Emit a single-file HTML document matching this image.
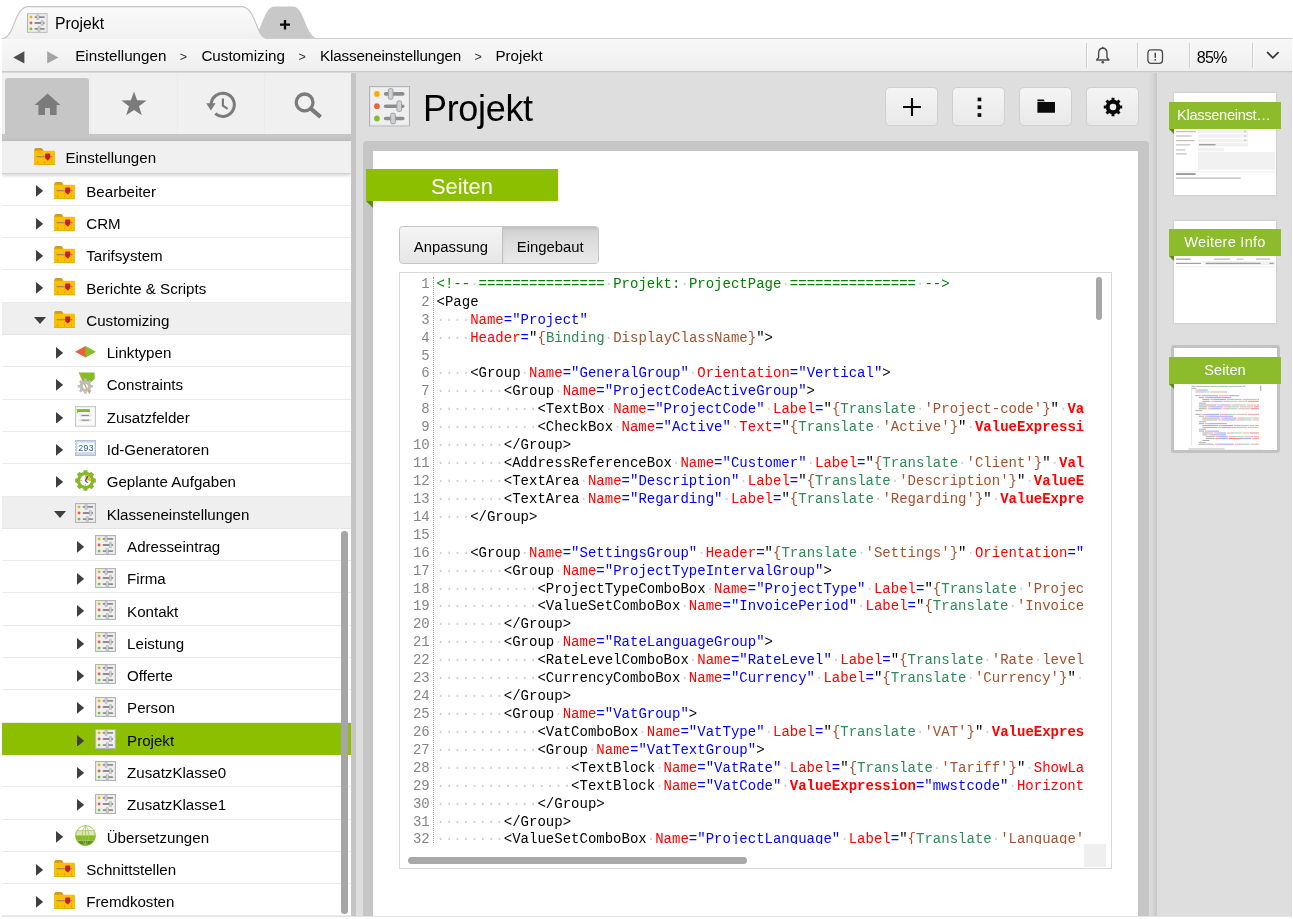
<!DOCTYPE html>
<html lang="de"><head><meta charset="utf-8"><title>Projekt</title>
<style>
html,body{margin:0;padding:0}
body{width:1293px;height:919px;overflow:hidden;background:#fff;position:relative;font-family:"Liberation Sans",sans-serif;color:#000;font-size:15.1px}
.abs,.row,.ic,.ar,.lbl{position:absolute}
#tabstrip{left:0;top:0;width:1293px;height:40px}
#tabtitle{left:55.1px;top:15.1px;font-size:15.75px;line-height:18px;color:#000}
#crumb{left:2px;top:39px;width:1290px;height:32px;background:linear-gradient(#f8f8f8,#efefef);border-bottom:1px solid #c9c9c9;box-shadow:0 1px 0 #d9d9d9;z-index:2}
#crumb span{position:absolute;top:8.1px;line-height:18px;font-size:15.2px;white-space:nowrap;color:#000}
#crumb .sep{font-size:12.5px;top:8.6px;color:#333}
#crumb .vs{position:absolute;top:3.5px;width:1px;height:25.5px;background:#cfcfcf;border-right:1px solid #fafafa}
#left{left:2px;top:73px;width:349.3px;height:843px;background:#fff;overflow:hidden}
#navtabs{left:0;top:0;width:349.3px;height:61px;background:#f0f0f0}
#navtabs .home{position:absolute;left:3.3px;top:5px;width:84.2px;height:56px;background:#c6c6c6;border-radius:3px 3px 0 0}
#navtabs .vs{position:absolute;top:0;width:1px;height:61px;background:#ebebeb}
#navbar{left:0;top:61px;width:349.3px;height:7.3px;background:#c6c6c6}
#treehead{left:0;top:68.3px;width:349.3px;height:31.6px;background:#f0f0f0;border-bottom:1px solid #d2d2d2;z-index:3;box-shadow:0 1px 4px rgba(0,0,0,0.22)}
#treehead .lbl{left:63.4px;top:8.2px;line-height:18px;white-space:nowrap}
#tree{left:0;top:68.3px;width:349.3px;height:775px}
.row{left:0;width:349.3px;height:32.3px;box-sizing:border-box;border-bottom:1.7px solid #ebebeb}
.row.hl{background:#efefef;border-bottom-color:#e4e4e4}
.row.sel{background:#8cbf00;border-bottom-color:#8cbf00}
.row .lbl{top:9.1px;line-height:18px;white-space:nowrap}
#tscroll{left:339.3px;top:458px;width:6.6px;height:383px;border-radius:3.3px;background:#a6a6a6;z-index:4}
#split{left:351.3px;top:73px;width:5.2px;height:843px;background:#c6c6c6}
#main{left:356px;top:73px;width:936px;height:843px;background:#dedede}
#title{left:423px;top:87px;font-size:36px;line-height:44px;letter-spacing:-0.32px;color:#000;white-space:nowrap}
.btn{position:absolute;top:87.3px;width:52.7px;height:39px;box-sizing:border-box;border:1px solid #cfcfcf;border-radius:4.5px;background:linear-gradient(#f4f4f4,#e9e9e9)}
#card{left:363px;top:141px;width:785.5px;height:775px;background:#c6c6c6;border-radius:4px 4px 0 0}
#cardin{left:373px;top:151px;width:765px;height:765px;background:#fff}
#ribbon{left:366px;top:169px;width:191.5px;height:32px;background:#8cbf00;color:#fff;font-size:21.9px;line-height:32px;text-align:center}
#ribbon span{position:relative;top:1.7px;left:0.2px}
#fold{left:366px;top:201px;width:0;height:0;border-top:7px solid #5b8a13;border-left:7px solid transparent}
#toggle{left:399px;top:226px;width:199.6px;height:38.3px;box-sizing:border-box;border:1px solid #c6c6c6;border-radius:3.5px;background:linear-gradient(#f4f4f4,#e6e6e6);overflow:hidden}
#toggle .on{position:absolute;left:101.6px;top:0;width:97px;height:36px;background:linear-gradient(#d0d0d0,#dbdbdb 35%,#e5e5e5 80%,#e9e9e9);border-left:1px solid #c2c2c2;box-shadow:inset 0 2px 3px rgba(0,0,0,0.08)}
#toggle span{position:absolute;top:10.9px;font-size:14.85px;line-height:18px;white-space:nowrap;color:#000}
#editor{left:399.2px;top:272.2px;width:712.4px;height:597px;box-sizing:border-box;border:1px solid #d9d9d9;background:#fff;overflow:hidden}
#nums{left:0;top:2.7px;width:29.6px;height:568.5px;overflow:hidden;text-align:right;color:#858585}
#gut{left:33.3px;top:4px;width:0;height:566px;border-left:1px dotted #9a9a9a}
#code{left:36.3px;top:2.7px;width:647.2px;height:568.5px;overflow:hidden;white-space:pre}
#nums,#code{font-family:"Liberation Mono",monospace;font-size:14.02px;line-height:17.93px}
#nums div,#code div{height:17.93px}
#code b{font-weight:normal}
#code i{font-style:normal;color:#cfcfcf}
#code .t{color:#000} #code .a{color:#ff0000} #code .v{color:#0000ff} #code .c{color:#008200}
#code .x{color:#ff0000;font-weight:bold} #code .m{color:#a5512c} #code .g{color:#2d8b57}
#vthumb{left:695.5px;top:3.6px;width:6.8px;height:43.6px;border-radius:3.4px;background:#a8a8a8}
#hthumb{left:8px;top:583.8px;width:338.5px;height:7.2px;border-radius:3.6px;background:#a8a8a8}
#corner{left:683.6px;top:571px;width:22.6px;height:22.4px;background:#efefef}
#strip{left:1148.5px;top:73px;width:8.3px;height:843px;background:linear-gradient(90deg,#dcdcdc,#d6d6d6 50%,#c6c6c6)}
#side{left:1156.8px;top:73px;width:135.2px;height:843px;background:#dedede}
.th{position:absolute;left:1174px;width:102.3px;height:102px;background:#fff;box-shadow:0 0 2px rgba(0,0,0,0.18);overflow:hidden}
.rb{position:absolute;left:1169px;width:112px;height:26.7px;background:#8cbb2b;color:#fff;font-size:14.6px;line-height:26.7px;text-align:center;white-space:nowrap}
.fd{position:absolute;left:1169px;width:0;height:0;border-top:5px solid #5b8a13;border-left:5px solid transparent}
#thsel{left:1170.5px;top:345px;width:109.5px;height:108px;box-sizing:border-box;border:3.4px solid #c2c2c2;border-radius:3px;background:#fff}
#botline{left:2px;top:915.6px;width:1290px;height:1px;background:#e4e4e4}
#app{position:absolute;left:0;top:0;width:1293px;height:919px;will-change:transform;background:#fff}
</style></head><body><div id="app">

<svg id="tabstrip" class="abs" width="1293" height="40" viewBox="0 0 1293 40">
<defs><linearGradient id="tg" x1="0" y1="0" x2="0" y2="1"><stop offset="0" stop-color="#fafafa"/><stop offset="1" stop-color="#f1f1f1"/></linearGradient></defs>
<path d="M250,38.6 C262,38.6 262,6.6 275,6.6 L293,6.6 C305,6.6 305,38.6 319,38.6 Z" fill="#c8c8c8"/>
<path d="M266,38.6 L1292,38.6" stroke="#cdcdcd" stroke-width="1.2" fill="none"/>
<path d="M2,39 C15,38.6 13.5,6.6 28.5,6.6 L241,6.6 C257,6.6 255,38.6 268,39 Z" fill="url(#tg)"/>
<path d="M2,38.6 C15,38.6 13.5,6.6 28.5,6.6 L241,6.6 C257,6.6 255,38.6 268,38.6" fill="none" stroke="#c3c3c3" stroke-width="1.1"/>
<path d="M280,24.7 L290,24.7 M285,19.9 L285,29.6" stroke="#0a0a0a" stroke-width="2.3" fill="none"/>
</svg>
<svg class="ic" style="left:27.2px;top:12.9px" width="20.5" height="20" viewBox="0 0 21 20"><rect x="0.51" y="0.51" width="19.98" height="18.98" fill="#efefef" stroke="#b4b4b4" stroke-width="1.02"/><rect x="1.54" y="1.54" width="17.93" height="16.93" fill="none" stroke="#e6e6e6" stroke-width="1.02"/><circle cx="4.05" cy="3.9" r="1.45" fill="#f5b000"/><rect x="7.6" y="3.0" width="10.6" height="1.8" rx="0.9" fill="#8c8d8f"/><rect x="9.9" y="1.2999999999999998" width="2.4" height="5.2" rx="0.7" fill="#d0d1d3" stroke="#9b9c9e" stroke-width="0.45"/><circle cx="4.05" cy="10" r="1.45" fill="#ea6238"/><rect x="7.6" y="9.1" width="10.6" height="1.8" rx="0.9" fill="#8c8d8f"/><rect x="14.3" y="7.4" width="2.4" height="5.2" rx="0.7" fill="#d0d1d3" stroke="#9b9c9e" stroke-width="0.45"/><circle cx="4.05" cy="16.1" r="1.45" fill="#86bc25"/><rect x="7.6" y="15.200000000000001" width="10.6" height="1.8" rx="0.9" fill="#8c8d8f"/><rect x="11.1" y="13.500000000000002" width="2.4" height="5.2" rx="0.7" fill="#d0d1d3" stroke="#9b9c9e" stroke-width="0.45"/></svg>
<div id="tabtitle" class="abs">Projekt</div>

<div id="crumb" class="abs">
<svg class="abs" style="left:11.4px;top:11.5px" width="12" height="13" viewBox="0 0 12 13"><path d="M11.4,0.2 L11.4,12.6 L0.2,6.4 Z" fill="#4e4e4e"/></svg>
<svg class="abs" style="left:45.4px;top:11.5px" width="12" height="13" viewBox="0 0 12 13"><path d="M0.2,0.2 L0.2,12.6 L11.4,6.4 Z" fill="#a4a4a4"/></svg>
<span style="left:73.2px">Einstellungen</span><span class="sep" style="left:177.8px">&gt;</span>
<span style="left:199.4px">Customizing</span><span class="sep" style="left:296.6px">&gt;</span>
<span style="left:318px;letter-spacing:-0.12px">Klasseneinstellungen</span><span class="sep" style="left:472.4px">&gt;</span>
<span style="left:493.4px">Projekt</span>
<div class="vs" style="left:1084px"></div><div class="vs" style="left:1135px"></div><div class="vs" style="left:1187px"></div><div class="vs" style="left:1249.6px"></div>
<svg class="abs" style="left:1093px;top:7px" width="16" height="20" viewBox="0 0 16 20"><path d="M7.8,2.2 C4.9,2.2 3.6,4.6 3.6,7.4 L3.6,11.6 L1.6,14 L14,14 L12,11.6 L12,7.4 C12,4.6 10.7,2.2 7.8,2.2 Z" fill="none" stroke="#4a4a4a" stroke-width="1.4" stroke-linejoin="round"/><path d="M7.8,0.8 L7.8,2.2" stroke="#4a4a4a" stroke-width="1.4"/><circle cx="7.8" cy="16.3" r="1.3" fill="#4a4a4a"/></svg>
<svg class="abs" style="left:1144.6px;top:9.6px" width="17" height="16" viewBox="0 0 17 16"><rect x="0.9" y="0.9" width="14.6" height="13.4" rx="3" fill="none" stroke="#4a4a4a" stroke-width="1.3"/><rect x="7.5" y="3.8" width="1.5" height="5" fill="#4a4a4a"/><rect x="7.5" y="10" width="1.5" height="1.6" fill="#4a4a4a"/></svg>
<span style="left:1194.8px;top:8.5px;font-size:16.1px;letter-spacing:-0.8px">85%</span>
<svg class="abs" style="left:1264px;top:11.6px" width="14" height="9" viewBox="0 0 14 9"><path d="M1.2,1.2 L6.9,6.9 L12.6,1.2" fill="none" stroke="#333" stroke-width="1.7"/></svg>
</div>

<div id="left" class="abs">
 <div id="navtabs" class="abs">
  <div class="home"></div>
  <div class="vs" style="left:88px"></div><div class="vs" style="left:175px"></div><div class="vs" style="left:261.6px"></div>
  <svg class="abs" style="left:32px;top:20px" width="27" height="23" viewBox="0 0 27 23"><path d="M13.5,0.6 L26.4,12 L22.6,12 L22.6,22 L16,22 L16,15 L11,15 L11,22 L4.4,22 L4.4,12 L0.6,12 Z" fill="#7b7b7b"/></svg>
  <svg class="abs" style="left:119px;top:18.2px" width="26" height="25" viewBox="0 0 26 25"><path d="M13,0.4 L16.1,9.3 L25.6,9.5 L18,15.2 L20.8,24.3 L13,18.9 L5.2,24.3 L8,15.2 L0.4,9.5 L9.9,9.3 Z" fill="#7b7b7b"/></svg>
  <svg class="abs" style="left:204px;top:18px" width="32" height="28" viewBox="0 0 32 28"><path d="M5.1,13.8 A11.6,11.6 0 1 1 9.24,22.69" fill="none" stroke="#7b7b7b" stroke-width="3"/><path d="M0.2,12.3 L9.6,12.3 L4.9,19.4 Z" fill="#7b7b7b"/><path d="M16.9,7.6 L16.9,14.6 L21.6,17.8" fill="none" stroke="#7b7b7b" stroke-width="2.2"/></svg>
  <svg class="abs" style="left:291px;top:18px" width="30" height="28" viewBox="0 0 30 28"><circle cx="11.6" cy="11.4" r="8.4" fill="none" stroke="#7b7b7b" stroke-width="3.3"/><path d="M17.8,17.6 L27.6,26" stroke="#7b7b7b" stroke-width="4.2"/></svg>
 </div>
 <div id="navbar" class="abs"></div>
 <div id="tree" class="abs">
<div class="row" style="top:32.3px"><svg class="ar" style="left:33.8px;top:11.9px" width="7.2" height="11.8" viewBox="0 0 7.2 11.8"><path d="M0,0 L7.2,5.9 L0,11.8 Z" fill="#3f3f3f"/></svg><svg class="ic" style="left:52.2px;top:8.0px" width="21" height="17.2" viewBox="0 0 21 17.2"><path d="M0,3 L0.8,0.6 Q1,0 1.8,0 L7,0 Q7.8,0 8.4,0.8 L9.6,3 Z" fill="#cf9d16"/><rect x="0" y="2.8" width="21" height="14.4" rx="0.8" fill="#f9c000"/><rect x="0" y="16.2" width="21" height="1" fill="#e4ae0c"/><rect x="2.6" y="8" width="15.8" height="1.3" fill="#9c8f58"/><path d="M11.2,6 Q11.2,5.5 11.8,5.5 L15.6,5.5 Q16.2,5.5 16.2,6 L16.2,10.2 L13.7,12.6 L11.2,10.2 Z" fill="#cb1b23"/><rect x="3.2" y="13.4" width="0.9" height="2" fill="#c99a19"/><rect x="10.1" y="13.4" width="0.9" height="2" fill="#c99a19"/><rect x="17" y="13.4" width="0.9" height="2" fill="#c99a19"/></svg><span class="lbl" style="left:84.3px">Bearbeiter</span></div>
<div class="row" style="top:64.6px"><svg class="ar" style="left:33.8px;top:11.9px" width="7.2" height="11.8" viewBox="0 0 7.2 11.8"><path d="M0,0 L7.2,5.9 L0,11.8 Z" fill="#3f3f3f"/></svg><svg class="ic" style="left:52.2px;top:8.0px" width="21" height="17.2" viewBox="0 0 21 17.2"><path d="M0,3 L0.8,0.6 Q1,0 1.8,0 L7,0 Q7.8,0 8.4,0.8 L9.6,3 Z" fill="#cf9d16"/><rect x="0" y="2.8" width="21" height="14.4" rx="0.8" fill="#f9c000"/><rect x="0" y="16.2" width="21" height="1" fill="#e4ae0c"/><rect x="2.6" y="8" width="15.8" height="1.3" fill="#9c8f58"/><path d="M11.2,6 Q11.2,5.5 11.8,5.5 L15.6,5.5 Q16.2,5.5 16.2,6 L16.2,10.2 L13.7,12.6 L11.2,10.2 Z" fill="#cb1b23"/><rect x="3.2" y="13.4" width="0.9" height="2" fill="#c99a19"/><rect x="10.1" y="13.4" width="0.9" height="2" fill="#c99a19"/><rect x="17" y="13.4" width="0.9" height="2" fill="#c99a19"/></svg><span class="lbl" style="left:84.3px">CRM</span></div>
<div class="row" style="top:96.9px"><svg class="ar" style="left:33.8px;top:11.9px" width="7.2" height="11.8" viewBox="0 0 7.2 11.8"><path d="M0,0 L7.2,5.9 L0,11.8 Z" fill="#3f3f3f"/></svg><svg class="ic" style="left:52.2px;top:8.0px" width="21" height="17.2" viewBox="0 0 21 17.2"><path d="M0,3 L0.8,0.6 Q1,0 1.8,0 L7,0 Q7.8,0 8.4,0.8 L9.6,3 Z" fill="#cf9d16"/><rect x="0" y="2.8" width="21" height="14.4" rx="0.8" fill="#f9c000"/><rect x="0" y="16.2" width="21" height="1" fill="#e4ae0c"/><rect x="2.6" y="8" width="15.8" height="1.3" fill="#9c8f58"/><path d="M11.2,6 Q11.2,5.5 11.8,5.5 L15.6,5.5 Q16.2,5.5 16.2,6 L16.2,10.2 L13.7,12.6 L11.2,10.2 Z" fill="#cb1b23"/><rect x="3.2" y="13.4" width="0.9" height="2" fill="#c99a19"/><rect x="10.1" y="13.4" width="0.9" height="2" fill="#c99a19"/><rect x="17" y="13.4" width="0.9" height="2" fill="#c99a19"/></svg><span class="lbl" style="left:84.3px">Tarifsystem</span></div>
<div class="row" style="top:129.2px"><svg class="ar" style="left:33.8px;top:11.9px" width="7.2" height="11.8" viewBox="0 0 7.2 11.8"><path d="M0,0 L7.2,5.9 L0,11.8 Z" fill="#3f3f3f"/></svg><svg class="ic" style="left:52.2px;top:8.0px" width="21" height="17.2" viewBox="0 0 21 17.2"><path d="M0,3 L0.8,0.6 Q1,0 1.8,0 L7,0 Q7.8,0 8.4,0.8 L9.6,3 Z" fill="#cf9d16"/><rect x="0" y="2.8" width="21" height="14.4" rx="0.8" fill="#f9c000"/><rect x="0" y="16.2" width="21" height="1" fill="#e4ae0c"/><rect x="2.6" y="8" width="15.8" height="1.3" fill="#9c8f58"/><path d="M11.2,6 Q11.2,5.5 11.8,5.5 L15.6,5.5 Q16.2,5.5 16.2,6 L16.2,10.2 L13.7,12.6 L11.2,10.2 Z" fill="#cb1b23"/><rect x="3.2" y="13.4" width="0.9" height="2" fill="#c99a19"/><rect x="10.1" y="13.4" width="0.9" height="2" fill="#c99a19"/><rect x="17" y="13.4" width="0.9" height="2" fill="#c99a19"/></svg><span class="lbl" style="left:84.3px">Berichte &amp; Scripts</span></div>
<div class="row hl" style="top:161.5px"><svg class="ar" style="left:31.8px;top:14.5px" width="12" height="7" viewBox="0 0 12 7"><path d="M0,0 L12,0 L6,7 Z" fill="#3f3f3f"/></svg><svg class="ic" style="left:52.2px;top:8.0px" width="21" height="17.2" viewBox="0 0 21 17.2"><path d="M0,3 L0.8,0.6 Q1,0 1.8,0 L7,0 Q7.8,0 8.4,0.8 L9.6,3 Z" fill="#cf9d16"/><rect x="0" y="2.8" width="21" height="14.4" rx="0.8" fill="#f9c000"/><rect x="0" y="16.2" width="21" height="1" fill="#e4ae0c"/><rect x="2.6" y="8" width="15.8" height="1.3" fill="#9c8f58"/><path d="M11.2,6 Q11.2,5.5 11.8,5.5 L15.6,5.5 Q16.2,5.5 16.2,6 L16.2,10.2 L13.7,12.6 L11.2,10.2 Z" fill="#cb1b23"/><rect x="3.2" y="13.4" width="0.9" height="2" fill="#c99a19"/><rect x="10.1" y="13.4" width="0.9" height="2" fill="#c99a19"/><rect x="17" y="13.4" width="0.9" height="2" fill="#c99a19"/></svg><span class="lbl" style="left:84.3px">Customizing</span></div>
<div class="row" style="top:193.8px"><svg class="ar" style="left:54.2px;top:11.9px" width="7.2" height="11.8" viewBox="0 0 7.2 11.8"><path d="M0,0 L7.2,5.9 L0,11.8 Z" fill="#3f3f3f"/></svg><svg class="ic" style="left:72.6px;top:11.1px" width="21" height="12" viewBox="0 0 21 12"><path d="M0,5.7 L10.6,0 L10.6,11.4 Z" fill="#e9623b"/><path d="M21,5.7 L10.6,0 L10.6,11.4 Z" fill="#86bc25"/><rect x="10.2" y="0.2" width="0.8" height="11" fill="#c8862c"/></svg><span class="lbl" style="left:104.7px">Linktypen</span></div>
<div class="row" style="top:226.1px"><svg class="ar" style="left:54.2px;top:11.9px" width="7.2" height="11.8" viewBox="0 0 7.2 11.8"><path d="M0,0 L7.2,5.9 L0,11.8 Z" fill="#3f3f3f"/></svg><svg class="ic" style="left:74.7px;top:4.9px" width="19" height="22" viewBox="0 0 19 22"><path d="M2,0.6 L17.2,0.6 Q17.6,0.6 17.6,1.1 L17.6,7 L14,10.2 L6,10.2 Z" fill="#86bc25"/><path d="M1.6,0.6 L2.8,0.6 L6.4,8 L5.2,8.6 Z" fill="#d2a438"/><path d="M13.83,12.83 L15.89,12.89 L15.89,15.51 L13.83,15.57 L13.18,17.14 L14.59,18.64 L12.74,20.49 L11.24,19.08 L9.67,19.73 L9.61,21.79 L6.99,21.79 L6.93,19.73 L5.36,19.08 L3.86,20.49 L2.01,18.64 L3.42,17.14 L2.77,15.57 L0.71,15.51 L0.71,12.89 L2.77,12.83 L3.42,11.26 L2.01,9.76 L3.86,7.91 L5.36,9.32 L6.93,8.67 L6.99,6.61 L9.61,6.61 L9.67,8.67 L11.24,9.32 L12.74,7.91 L14.59,9.76 L13.18,11.26 Z" fill="#bdbdbd"/><circle cx="8.3" cy="14.2" r="2.5" fill="#fff"/><path d="M6.6,11.4 L8,11.4 L10.2,16.6 L8.8,16.6 Z" fill="#d2a438"/><path d="M10.6,18.4 L12,18 L13.4,21.4 L11.8,21.4 Z" fill="#d2a438"/></svg><span class="lbl" style="left:104.7px">Constraints</span></div>
<div class="row" style="top:258.4px"><svg class="ar" style="left:54.2px;top:11.9px" width="7.2" height="11.8" viewBox="0 0 7.2 11.8"><path d="M0,0 L7.2,5.9 L0,11.8 Z" fill="#3f3f3f"/></svg><svg class="ic" style="left:72.6px;top:6.4px" width="21" height="21" viewBox="0 0 21 21"><rect x="0.5" y="0.5" width="20" height="19.6" fill="#fbfbfb" stroke="#bdbdbd"/><rect x="1.2" y="1.2" width="18.6" height="18.2" fill="none" stroke="#ececec" stroke-width="1"/><rect x="1.9" y="3.1" width="13" height="2.9" fill="#84bd22"/><path d="M1.9,6 L3.2,6 L1.9,7.3 Z" fill="#5d8c17"/><rect x="4.2" y="8.2" width="12.4" height="2.6" rx="1" fill="#e3e3e3"/><rect x="6.6" y="9" width="7.4" height="1" fill="#8a8a8a"/><rect x="4.2" y="12.9" width="12.4" height="2.6" rx="1" fill="#e3e3e3"/><rect x="6.6" y="13.7" width="7.4" height="1" fill="#8a8a8a"/></svg><span class="lbl" style="left:104.7px">Zusatzfelder</span></div>
<div class="row" style="top:290.7px"><svg class="ar" style="left:54.2px;top:11.9px" width="7.2" height="11.8" viewBox="0 0 7.2 11.8"><path d="M0,0 L7.2,5.9 L0,11.8 Z" fill="#3f3f3f"/></svg><svg class="ic" style="left:72.6px;top:8.2px" width="21" height="16" viewBox="0 0 21 16"><rect x="0.5" y="0.5" width="20" height="15" fill="#c9d7e6" stroke="#a9bfd6"/><rect x="2.4" y="2.6" width="17" height="9.6" fill="#fff"/><text x="10.9" y="10.9" text-anchor="middle" font-family="Liberation Mono, monospace" font-size="9.8" textLength="16" lengthAdjust="spacingAndGlyphs" fill="#2f5f90">293</text><rect x="0" y="2" width="1" height="1.2" fill="#fff"/><rect x="0" y="5" width="1" height="1.2" fill="#fff"/><rect x="0" y="8" width="1" height="1.2" fill="#fff"/><rect x="0" y="11" width="1" height="1.2" fill="#fff"/></svg><span class="lbl" style="left:104.7px">Id-Generatoren</span></div>
<div class="row" style="top:323.0px"><svg class="ar" style="left:54.2px;top:11.9px" width="7.2" height="11.8" viewBox="0 0 7.2 11.8"><path d="M0,0 L7.2,5.9 L0,11.8 Z" fill="#3f3f3f"/></svg><svg class="ic" style="left:72.6px;top:5.6px" width="21" height="21" viewBox="0 0 21 21"><path d="M18.52,8.37 L20.83,8.61 L20.83,12.39 L18.52,12.63 L17.68,14.67 L19.14,16.46 L16.46,19.14 L14.67,17.68 L12.63,18.52 L12.39,20.83 L8.61,20.83 L8.37,18.52 L6.33,17.68 L4.54,19.14 L1.86,16.46 L3.32,14.67 L2.48,12.63 L0.17,12.39 L0.17,8.61 L2.48,8.37 L3.32,6.33 L1.86,4.54 L4.54,1.86 L6.33,3.32 L8.37,2.48 L8.61,0.17 L12.39,0.17 L12.63,2.48 L14.67,3.32 L16.46,1.86 L19.14,4.54 L17.68,6.33 Z" fill="#84b92a"/><circle cx="10.5" cy="10.5" r="8.5" fill="#84b92a"/><circle cx="10.5" cy="10.5" r="5.4" fill="#fff"/><path d="M10.5,10.5 L10.5,5.1 A5.4,5.4 0 0 1 15.9,10.5 Z" fill="#fbbb12"/><path d="M10.5,5.4 L10.5,6.8 M10.5,14.2 L10.5,15.6 M5.4,10.5 L6.8,10.5 M14.2,10.5 L15.6,10.5" stroke="#ee6a4c" stroke-width="0.8"/><path d="M12.6,6.4 L10.4,10.6 L12.2,12.4" stroke="#2c5f91" stroke-width="1.3" fill="none" stroke-linecap="round" stroke-linejoin="round"/></svg><span class="lbl" style="left:104.7px">Geplante Aufgaben</span></div>
<div class="row hl" style="top:355.3px"><svg class="ar" style="left:52.2px;top:14.5px" width="12" height="7" viewBox="0 0 12 7"><path d="M0,0 L12,0 L6,7 Z" fill="#3f3f3f"/></svg><svg class="ic" style="left:72.6px;top:6.4px" width="21" height="20" viewBox="0 0 21 20"><rect x="0.50" y="0.50" width="20.00" height="19.00" fill="#efefef" stroke="#b4b4b4" stroke-width="1.00"/><rect x="1.50" y="1.50" width="18.00" height="17.00" fill="none" stroke="#e6e6e6" stroke-width="1.00"/><circle cx="4.05" cy="3.9" r="1.45" fill="#f5b000"/><rect x="7.6" y="3.0" width="10.6" height="1.8" rx="0.9" fill="#8c8d8f"/><rect x="9.9" y="1.2999999999999998" width="2.4" height="5.2" rx="0.7" fill="#d0d1d3" stroke="#9b9c9e" stroke-width="0.45"/><circle cx="4.05" cy="10" r="1.45" fill="#ea6238"/><rect x="7.6" y="9.1" width="10.6" height="1.8" rx="0.9" fill="#8c8d8f"/><rect x="14.3" y="7.4" width="2.4" height="5.2" rx="0.7" fill="#d0d1d3" stroke="#9b9c9e" stroke-width="0.45"/><circle cx="4.05" cy="16.1" r="1.45" fill="#86bc25"/><rect x="7.6" y="15.200000000000001" width="10.6" height="1.8" rx="0.9" fill="#8c8d8f"/><rect x="11.1" y="13.500000000000002" width="2.4" height="5.2" rx="0.7" fill="#d0d1d3" stroke="#9b9c9e" stroke-width="0.45"/></svg><span class="lbl" style="left:104.7px">Klasseneinstellungen</span></div>
<div class="row" style="top:387.6px"><svg class="ar" style="left:74.6px;top:11.9px" width="7.2" height="11.8" viewBox="0 0 7.2 11.8"><path d="M0,0 L7.2,5.9 L0,11.8 Z" fill="#3f3f3f"/></svg><svg class="ic" style="left:93.0px;top:6.4px" width="21" height="20" viewBox="0 0 21 20"><rect x="0.50" y="0.50" width="20.00" height="19.00" fill="#efefef" stroke="#b4b4b4" stroke-width="1.00"/><rect x="1.50" y="1.50" width="18.00" height="17.00" fill="none" stroke="#e6e6e6" stroke-width="1.00"/><circle cx="4.05" cy="3.9" r="1.45" fill="#f5b000"/><rect x="7.6" y="3.0" width="10.6" height="1.8" rx="0.9" fill="#8c8d8f"/><rect x="9.9" y="1.2999999999999998" width="2.4" height="5.2" rx="0.7" fill="#d0d1d3" stroke="#9b9c9e" stroke-width="0.45"/><circle cx="4.05" cy="10" r="1.45" fill="#ea6238"/><rect x="7.6" y="9.1" width="10.6" height="1.8" rx="0.9" fill="#8c8d8f"/><rect x="14.3" y="7.4" width="2.4" height="5.2" rx="0.7" fill="#d0d1d3" stroke="#9b9c9e" stroke-width="0.45"/><circle cx="4.05" cy="16.1" r="1.45" fill="#86bc25"/><rect x="7.6" y="15.200000000000001" width="10.6" height="1.8" rx="0.9" fill="#8c8d8f"/><rect x="11.1" y="13.500000000000002" width="2.4" height="5.2" rx="0.7" fill="#d0d1d3" stroke="#9b9c9e" stroke-width="0.45"/></svg><span class="lbl" style="left:125.1px">Adresseintrag</span></div>
<div class="row" style="top:419.9px"><svg class="ar" style="left:74.6px;top:11.9px" width="7.2" height="11.8" viewBox="0 0 7.2 11.8"><path d="M0,0 L7.2,5.9 L0,11.8 Z" fill="#3f3f3f"/></svg><svg class="ic" style="left:93.0px;top:6.4px" width="21" height="20" viewBox="0 0 21 20"><rect x="0.50" y="0.50" width="20.00" height="19.00" fill="#efefef" stroke="#b4b4b4" stroke-width="1.00"/><rect x="1.50" y="1.50" width="18.00" height="17.00" fill="none" stroke="#e6e6e6" stroke-width="1.00"/><circle cx="4.05" cy="3.9" r="1.45" fill="#f5b000"/><rect x="7.6" y="3.0" width="10.6" height="1.8" rx="0.9" fill="#8c8d8f"/><rect x="9.9" y="1.2999999999999998" width="2.4" height="5.2" rx="0.7" fill="#d0d1d3" stroke="#9b9c9e" stroke-width="0.45"/><circle cx="4.05" cy="10" r="1.45" fill="#ea6238"/><rect x="7.6" y="9.1" width="10.6" height="1.8" rx="0.9" fill="#8c8d8f"/><rect x="14.3" y="7.4" width="2.4" height="5.2" rx="0.7" fill="#d0d1d3" stroke="#9b9c9e" stroke-width="0.45"/><circle cx="4.05" cy="16.1" r="1.45" fill="#86bc25"/><rect x="7.6" y="15.200000000000001" width="10.6" height="1.8" rx="0.9" fill="#8c8d8f"/><rect x="11.1" y="13.500000000000002" width="2.4" height="5.2" rx="0.7" fill="#d0d1d3" stroke="#9b9c9e" stroke-width="0.45"/></svg><span class="lbl" style="left:125.1px">Firma</span></div>
<div class="row" style="top:452.2px"><svg class="ar" style="left:74.6px;top:11.9px" width="7.2" height="11.8" viewBox="0 0 7.2 11.8"><path d="M0,0 L7.2,5.9 L0,11.8 Z" fill="#3f3f3f"/></svg><svg class="ic" style="left:93.0px;top:6.4px" width="21" height="20" viewBox="0 0 21 20"><rect x="0.50" y="0.50" width="20.00" height="19.00" fill="#efefef" stroke="#b4b4b4" stroke-width="1.00"/><rect x="1.50" y="1.50" width="18.00" height="17.00" fill="none" stroke="#e6e6e6" stroke-width="1.00"/><circle cx="4.05" cy="3.9" r="1.45" fill="#f5b000"/><rect x="7.6" y="3.0" width="10.6" height="1.8" rx="0.9" fill="#8c8d8f"/><rect x="9.9" y="1.2999999999999998" width="2.4" height="5.2" rx="0.7" fill="#d0d1d3" stroke="#9b9c9e" stroke-width="0.45"/><circle cx="4.05" cy="10" r="1.45" fill="#ea6238"/><rect x="7.6" y="9.1" width="10.6" height="1.8" rx="0.9" fill="#8c8d8f"/><rect x="14.3" y="7.4" width="2.4" height="5.2" rx="0.7" fill="#d0d1d3" stroke="#9b9c9e" stroke-width="0.45"/><circle cx="4.05" cy="16.1" r="1.45" fill="#86bc25"/><rect x="7.6" y="15.200000000000001" width="10.6" height="1.8" rx="0.9" fill="#8c8d8f"/><rect x="11.1" y="13.500000000000002" width="2.4" height="5.2" rx="0.7" fill="#d0d1d3" stroke="#9b9c9e" stroke-width="0.45"/></svg><span class="lbl" style="left:125.1px">Kontakt</span></div>
<div class="row" style="top:484.5px"><svg class="ar" style="left:74.6px;top:11.9px" width="7.2" height="11.8" viewBox="0 0 7.2 11.8"><path d="M0,0 L7.2,5.9 L0,11.8 Z" fill="#3f3f3f"/></svg><svg class="ic" style="left:93.0px;top:6.4px" width="21" height="20" viewBox="0 0 21 20"><rect x="0.50" y="0.50" width="20.00" height="19.00" fill="#efefef" stroke="#b4b4b4" stroke-width="1.00"/><rect x="1.50" y="1.50" width="18.00" height="17.00" fill="none" stroke="#e6e6e6" stroke-width="1.00"/><circle cx="4.05" cy="3.9" r="1.45" fill="#f5b000"/><rect x="7.6" y="3.0" width="10.6" height="1.8" rx="0.9" fill="#8c8d8f"/><rect x="9.9" y="1.2999999999999998" width="2.4" height="5.2" rx="0.7" fill="#d0d1d3" stroke="#9b9c9e" stroke-width="0.45"/><circle cx="4.05" cy="10" r="1.45" fill="#ea6238"/><rect x="7.6" y="9.1" width="10.6" height="1.8" rx="0.9" fill="#8c8d8f"/><rect x="14.3" y="7.4" width="2.4" height="5.2" rx="0.7" fill="#d0d1d3" stroke="#9b9c9e" stroke-width="0.45"/><circle cx="4.05" cy="16.1" r="1.45" fill="#86bc25"/><rect x="7.6" y="15.200000000000001" width="10.6" height="1.8" rx="0.9" fill="#8c8d8f"/><rect x="11.1" y="13.500000000000002" width="2.4" height="5.2" rx="0.7" fill="#d0d1d3" stroke="#9b9c9e" stroke-width="0.45"/></svg><span class="lbl" style="left:125.1px">Leistung</span></div>
<div class="row" style="top:516.8px"><svg class="ar" style="left:74.6px;top:11.9px" width="7.2" height="11.8" viewBox="0 0 7.2 11.8"><path d="M0,0 L7.2,5.9 L0,11.8 Z" fill="#3f3f3f"/></svg><svg class="ic" style="left:93.0px;top:6.4px" width="21" height="20" viewBox="0 0 21 20"><rect x="0.50" y="0.50" width="20.00" height="19.00" fill="#efefef" stroke="#b4b4b4" stroke-width="1.00"/><rect x="1.50" y="1.50" width="18.00" height="17.00" fill="none" stroke="#e6e6e6" stroke-width="1.00"/><circle cx="4.05" cy="3.9" r="1.45" fill="#f5b000"/><rect x="7.6" y="3.0" width="10.6" height="1.8" rx="0.9" fill="#8c8d8f"/><rect x="9.9" y="1.2999999999999998" width="2.4" height="5.2" rx="0.7" fill="#d0d1d3" stroke="#9b9c9e" stroke-width="0.45"/><circle cx="4.05" cy="10" r="1.45" fill="#ea6238"/><rect x="7.6" y="9.1" width="10.6" height="1.8" rx="0.9" fill="#8c8d8f"/><rect x="14.3" y="7.4" width="2.4" height="5.2" rx="0.7" fill="#d0d1d3" stroke="#9b9c9e" stroke-width="0.45"/><circle cx="4.05" cy="16.1" r="1.45" fill="#86bc25"/><rect x="7.6" y="15.200000000000001" width="10.6" height="1.8" rx="0.9" fill="#8c8d8f"/><rect x="11.1" y="13.500000000000002" width="2.4" height="5.2" rx="0.7" fill="#d0d1d3" stroke="#9b9c9e" stroke-width="0.45"/></svg><span class="lbl" style="left:125.1px">Offerte</span></div>
<div class="row" style="top:549.1px"><svg class="ar" style="left:74.6px;top:11.9px" width="7.2" height="11.8" viewBox="0 0 7.2 11.8"><path d="M0,0 L7.2,5.9 L0,11.8 Z" fill="#3f3f3f"/></svg><svg class="ic" style="left:93.0px;top:6.4px" width="21" height="20" viewBox="0 0 21 20"><rect x="0.50" y="0.50" width="20.00" height="19.00" fill="#efefef" stroke="#b4b4b4" stroke-width="1.00"/><rect x="1.50" y="1.50" width="18.00" height="17.00" fill="none" stroke="#e6e6e6" stroke-width="1.00"/><circle cx="4.05" cy="3.9" r="1.45" fill="#f5b000"/><rect x="7.6" y="3.0" width="10.6" height="1.8" rx="0.9" fill="#8c8d8f"/><rect x="9.9" y="1.2999999999999998" width="2.4" height="5.2" rx="0.7" fill="#d0d1d3" stroke="#9b9c9e" stroke-width="0.45"/><circle cx="4.05" cy="10" r="1.45" fill="#ea6238"/><rect x="7.6" y="9.1" width="10.6" height="1.8" rx="0.9" fill="#8c8d8f"/><rect x="14.3" y="7.4" width="2.4" height="5.2" rx="0.7" fill="#d0d1d3" stroke="#9b9c9e" stroke-width="0.45"/><circle cx="4.05" cy="16.1" r="1.45" fill="#86bc25"/><rect x="7.6" y="15.200000000000001" width="10.6" height="1.8" rx="0.9" fill="#8c8d8f"/><rect x="11.1" y="13.500000000000002" width="2.4" height="5.2" rx="0.7" fill="#d0d1d3" stroke="#9b9c9e" stroke-width="0.45"/></svg><span class="lbl" style="left:125.1px">Person</span></div>
<div class="row sel" style="top:581.4px"><svg class="ar" style="left:74.6px;top:11.9px" width="7.2" height="11.8" viewBox="0 0 7.2 11.8"><path d="M0,0 L7.2,5.9 L0,11.8 Z" fill="#3f3f3f"/></svg><svg class="ic" style="left:93.0px;top:6.4px" width="21" height="20" viewBox="0 0 21 20"><rect x="0.50" y="0.50" width="20.00" height="19.00" fill="#efefef" stroke="#b4b4b4" stroke-width="1.00"/><rect x="1.50" y="1.50" width="18.00" height="17.00" fill="none" stroke="#e6e6e6" stroke-width="1.00"/><circle cx="4.05" cy="3.9" r="1.45" fill="#f5b000"/><rect x="7.6" y="3.0" width="10.6" height="1.8" rx="0.9" fill="#8c8d8f"/><rect x="9.9" y="1.2999999999999998" width="2.4" height="5.2" rx="0.7" fill="#d0d1d3" stroke="#9b9c9e" stroke-width="0.45"/><circle cx="4.05" cy="10" r="1.45" fill="#ea6238"/><rect x="7.6" y="9.1" width="10.6" height="1.8" rx="0.9" fill="#8c8d8f"/><rect x="14.3" y="7.4" width="2.4" height="5.2" rx="0.7" fill="#d0d1d3" stroke="#9b9c9e" stroke-width="0.45"/><circle cx="4.05" cy="16.1" r="1.45" fill="#86bc25"/><rect x="7.6" y="15.200000000000001" width="10.6" height="1.8" rx="0.9" fill="#8c8d8f"/><rect x="11.1" y="13.500000000000002" width="2.4" height="5.2" rx="0.7" fill="#d0d1d3" stroke="#9b9c9e" stroke-width="0.45"/></svg><span class="lbl" style="left:125.1px">Projekt</span></div>
<div class="row" style="top:613.7px"><svg class="ar" style="left:74.6px;top:11.9px" width="7.2" height="11.8" viewBox="0 0 7.2 11.8"><path d="M0,0 L7.2,5.9 L0,11.8 Z" fill="#3f3f3f"/></svg><svg class="ic" style="left:93.0px;top:6.4px" width="21" height="20" viewBox="0 0 21 20"><rect x="0.50" y="0.50" width="20.00" height="19.00" fill="#efefef" stroke="#b4b4b4" stroke-width="1.00"/><rect x="1.50" y="1.50" width="18.00" height="17.00" fill="none" stroke="#e6e6e6" stroke-width="1.00"/><circle cx="4.05" cy="3.9" r="1.45" fill="#f5b000"/><rect x="7.6" y="3.0" width="10.6" height="1.8" rx="0.9" fill="#8c8d8f"/><rect x="9.9" y="1.2999999999999998" width="2.4" height="5.2" rx="0.7" fill="#d0d1d3" stroke="#9b9c9e" stroke-width="0.45"/><circle cx="4.05" cy="10" r="1.45" fill="#ea6238"/><rect x="7.6" y="9.1" width="10.6" height="1.8" rx="0.9" fill="#8c8d8f"/><rect x="14.3" y="7.4" width="2.4" height="5.2" rx="0.7" fill="#d0d1d3" stroke="#9b9c9e" stroke-width="0.45"/><circle cx="4.05" cy="16.1" r="1.45" fill="#86bc25"/><rect x="7.6" y="15.200000000000001" width="10.6" height="1.8" rx="0.9" fill="#8c8d8f"/><rect x="11.1" y="13.500000000000002" width="2.4" height="5.2" rx="0.7" fill="#d0d1d3" stroke="#9b9c9e" stroke-width="0.45"/></svg><span class="lbl" style="left:125.1px">ZusatzKlasse0</span></div>
<div class="row" style="top:646.0px"><svg class="ar" style="left:74.6px;top:11.9px" width="7.2" height="11.8" viewBox="0 0 7.2 11.8"><path d="M0,0 L7.2,5.9 L0,11.8 Z" fill="#3f3f3f"/></svg><svg class="ic" style="left:93.0px;top:6.4px" width="21" height="20" viewBox="0 0 21 20"><rect x="0.50" y="0.50" width="20.00" height="19.00" fill="#efefef" stroke="#b4b4b4" stroke-width="1.00"/><rect x="1.50" y="1.50" width="18.00" height="17.00" fill="none" stroke="#e6e6e6" stroke-width="1.00"/><circle cx="4.05" cy="3.9" r="1.45" fill="#f5b000"/><rect x="7.6" y="3.0" width="10.6" height="1.8" rx="0.9" fill="#8c8d8f"/><rect x="9.9" y="1.2999999999999998" width="2.4" height="5.2" rx="0.7" fill="#d0d1d3" stroke="#9b9c9e" stroke-width="0.45"/><circle cx="4.05" cy="10" r="1.45" fill="#ea6238"/><rect x="7.6" y="9.1" width="10.6" height="1.8" rx="0.9" fill="#8c8d8f"/><rect x="14.3" y="7.4" width="2.4" height="5.2" rx="0.7" fill="#d0d1d3" stroke="#9b9c9e" stroke-width="0.45"/><circle cx="4.05" cy="16.1" r="1.45" fill="#86bc25"/><rect x="7.6" y="15.200000000000001" width="10.6" height="1.8" rx="0.9" fill="#8c8d8f"/><rect x="11.1" y="13.500000000000002" width="2.4" height="5.2" rx="0.7" fill="#d0d1d3" stroke="#9b9c9e" stroke-width="0.45"/></svg><span class="lbl" style="left:125.1px">ZusatzKlasse1</span></div>
<div class="row" style="top:678.3px"><svg class="ar" style="left:54.2px;top:11.9px" width="7.2" height="11.8" viewBox="0 0 7.2 11.8"><path d="M0,0 L7.2,5.9 L0,11.8 Z" fill="#3f3f3f"/></svg><svg class="ic" style="left:72.6px;top:5.6px" width="21" height="21" viewBox="0 0 21 21"><defs><clipPath id="gc"><circle cx="10.5" cy="10.5" r="10.2"/></clipPath></defs><g clip-path="url(#gc)"><rect x="0" y="0" width="21" height="5.6" fill="#fdfefb"/><rect x="0" y="5.6" width="21" height="5" fill="#dbe7b0"/><rect x="0" y="10.6" width="21" height="5" fill="#86bc25"/><rect x="0" y="15.6" width="21" height="6" fill="#5b8c1c"/><path d="M10.5,0 L10.5,21 M10.5,0 Q3.5,10.5 10.5,21 M10.5,0 Q17.5,10.5 10.5,21 M0,5.6 L21,5.6 M0,10.6 L21,10.6 M0,15.6 L21,15.6" stroke="#9fc653" stroke-width="0.7" fill="none"/></g><circle cx="10.5" cy="10.5" r="9.9" fill="none" stroke="#8fbf3a" stroke-width="0.8"/></svg><span class="lbl" style="left:104.7px">Übersetzungen</span></div>
<div class="row" style="top:710.6px"><svg class="ar" style="left:33.8px;top:11.9px" width="7.2" height="11.8" viewBox="0 0 7.2 11.8"><path d="M0,0 L7.2,5.9 L0,11.8 Z" fill="#3f3f3f"/></svg><svg class="ic" style="left:52.2px;top:8.0px" width="21" height="17.2" viewBox="0 0 21 17.2"><path d="M0,3 L0.8,0.6 Q1,0 1.8,0 L7,0 Q7.8,0 8.4,0.8 L9.6,3 Z" fill="#cf9d16"/><rect x="0" y="2.8" width="21" height="14.4" rx="0.8" fill="#f9c000"/><rect x="0" y="16.2" width="21" height="1" fill="#e4ae0c"/><rect x="2.6" y="8" width="15.8" height="1.3" fill="#9c8f58"/><path d="M11.2,6 Q11.2,5.5 11.8,5.5 L15.6,5.5 Q16.2,5.5 16.2,6 L16.2,10.2 L13.7,12.6 L11.2,10.2 Z" fill="#cb1b23"/><rect x="3.2" y="13.4" width="0.9" height="2" fill="#c99a19"/><rect x="10.1" y="13.4" width="0.9" height="2" fill="#c99a19"/><rect x="17" y="13.4" width="0.9" height="2" fill="#c99a19"/></svg><span class="lbl" style="left:84.3px">Schnittstellen</span></div>
<div class="row" style="top:742.9px"><svg class="ar" style="left:33.8px;top:11.9px" width="7.2" height="11.8" viewBox="0 0 7.2 11.8"><path d="M0,0 L7.2,5.9 L0,11.8 Z" fill="#3f3f3f"/></svg><svg class="ic" style="left:52.2px;top:8.0px" width="21" height="17.2" viewBox="0 0 21 17.2"><path d="M0,3 L0.8,0.6 Q1,0 1.8,0 L7,0 Q7.8,0 8.4,0.8 L9.6,3 Z" fill="#cf9d16"/><rect x="0" y="2.8" width="21" height="14.4" rx="0.8" fill="#f9c000"/><rect x="0" y="16.2" width="21" height="1" fill="#e4ae0c"/><rect x="2.6" y="8" width="15.8" height="1.3" fill="#9c8f58"/><path d="M11.2,6 Q11.2,5.5 11.8,5.5 L15.6,5.5 Q16.2,5.5 16.2,6 L16.2,10.2 L13.7,12.6 L11.2,10.2 Z" fill="#cb1b23"/><rect x="3.2" y="13.4" width="0.9" height="2" fill="#c99a19"/><rect x="10.1" y="13.4" width="0.9" height="2" fill="#c99a19"/><rect x="17" y="13.4" width="0.9" height="2" fill="#c99a19"/></svg><span class="lbl" style="left:84.3px">Fremdkosten</span></div>
 </div>
 <div id="treehead" class="abs"><svg class="ic" style="left:32px;top:6.8px" width="21" height="17.2" viewBox="0 0 21 17.2"><path d="M0,3 L0.8,0.6 Q1,0 1.8,0 L7,0 Q7.8,0 8.4,0.8 L9.6,3 Z" fill="#cf9d16"/><rect x="0" y="2.8" width="21" height="14.4" rx="0.8" fill="#f9c000"/><rect x="0" y="16.2" width="21" height="1" fill="#e4ae0c"/><rect x="2.6" y="8" width="15.8" height="1.3" fill="#9c8f58"/><path d="M11.2,6 Q11.2,5.5 11.8,5.5 L15.6,5.5 Q16.2,5.5 16.2,6 L16.2,10.2 L13.7,12.6 L11.2,10.2 Z" fill="#cb1b23"/><rect x="3.2" y="13.4" width="0.9" height="2" fill="#c99a19"/><rect x="10.1" y="13.4" width="0.9" height="2" fill="#c99a19"/><rect x="17" y="13.4" width="0.9" height="2" fill="#c99a19"/></svg><span class="lbl">Einstellungen</span></div>
 <div id="tscroll" class="abs"></div>
</div>
<div id="split" class="abs"></div>

<div id="main" class="abs"></div>
<svg class="ic" preserveAspectRatio="none" style="left:369px;top:86.3px" width="41" height="40.4" viewBox="0 0 21 20"><rect x="0.26" y="0.26" width="20.49" height="19.49" fill="#efefef" stroke="#b4b4b4" stroke-width="0.51"/><rect x="0.77" y="0.77" width="19.46" height="18.46" fill="none" stroke="#e6e6e6" stroke-width="0.51"/><circle cx="4.05" cy="3.9" r="1.45" fill="#f5b000"/><rect x="7.6" y="3.0" width="10.6" height="1.8" rx="0.9" fill="#8c8d8f"/><rect x="9.9" y="1.2999999999999998" width="2.4" height="5.2" rx="0.7" fill="#d0d1d3" stroke="#9b9c9e" stroke-width="0.45"/><circle cx="4.05" cy="10" r="1.45" fill="#ea6238"/><rect x="7.6" y="9.1" width="10.6" height="1.8" rx="0.9" fill="#8c8d8f"/><rect x="14.3" y="7.4" width="2.4" height="5.2" rx="0.7" fill="#d0d1d3" stroke="#9b9c9e" stroke-width="0.45"/><circle cx="4.05" cy="16.1" r="1.45" fill="#86bc25"/><rect x="7.6" y="15.200000000000001" width="10.6" height="1.8" rx="0.9" fill="#8c8d8f"/><rect x="11.1" y="13.500000000000002" width="2.4" height="5.2" rx="0.7" fill="#d0d1d3" stroke="#9b9c9e" stroke-width="0.45"/></svg>
<div id="title" class="abs">Projekt</div>
<div class="btn" style="left:885px"><svg class="abs" style="left:15.5px;top:8.6px" width="20" height="20" viewBox="0 0 20 20"><path d="M1,10 L19,10 M10,1 L10,19" stroke="#0a0a0a" stroke-width="2.1"/></svg></div>
<div class="btn" style="left:952.2px"><svg class="abs" style="left:23.6px;top:8.6px" width="5" height="21" viewBox="0 0 5 21"><rect x="0.6" y="0.6" width="3.7" height="3.7" fill="#0a0a0a"/><rect x="0.6" y="8.4" width="3.7" height="3.7" fill="#0a0a0a"/><rect x="0.6" y="16.2" width="3.7" height="3.7" fill="#0a0a0a"/></svg></div>
<div class="btn" style="left:1019.4px"><svg class="abs" style="left:16.6px;top:10.3px" width="18.6" height="14.4" viewBox="0 0 19 15" preserveAspectRatio="none"><path d="M0.4,0.4 L6.6,0.4 L8.2,2.3 L0.4,2.3 Z M0.4,3.2 L18.4,3.2 L18.4,14.4 L0.4,14.4 Z" fill="#0a0a0a"/></svg></div>
<div class="btn" style="left:1086.4px"><svg class="abs" style="left:15.6px;top:8.8px" width="20" height="20" viewBox="0 0 20 20"><path d="M16.83,8.47 L19.19,8.57 L19.19,11.43 L16.83,11.53 L15.91,13.75 L17.51,15.49 L15.49,17.51 L13.75,15.91 L11.53,16.83 L11.43,19.19 L8.57,19.19 L8.47,16.83 L6.25,15.91 L4.51,17.51 L2.49,15.49 L4.09,13.75 L3.17,11.53 L0.81,11.43 L0.81,8.57 L3.17,8.47 L4.09,6.25 L2.49,4.51 L4.51,2.49 L6.25,4.09 L8.47,3.17 L8.57,0.81 L11.43,0.81 L11.53,3.17 L13.75,4.09 L15.49,2.49 L17.51,4.51 L15.91,6.25 Z" fill="#0a0a0a"/><circle cx="10" cy="10" r="7.2" fill="#0a0a0a"/><circle cx="10" cy="10" r="3.3" fill="#ededed"/></svg></div>

<div id="card" class="abs"></div>
<div id="cardin" class="abs"></div>
<div id="ribbon" class="abs"><span>Seiten</span></div>
<div id="fold" class="abs"></div>
<div id="toggle" class="abs"><div class="on"></div><span style="left:13.8px">Anpassung</span><span style="left:116.8px">Eingebaut</span></div>
<div id="editor" class="abs">
 <div id="nums" class="abs"><div>1</div><div>2</div><div>3</div><div>4</div><div>5</div><div>6</div><div>7</div><div>8</div><div>9</div><div>10</div><div>11</div><div>12</div><div>13</div><div>14</div><div>15</div><div>16</div><div>17</div><div>18</div><div>19</div><div>20</div><div>21</div><div>22</div><div>23</div><div>24</div><div>25</div><div>26</div><div>27</div><div>28</div><div>29</div><div>30</div><div>31</div><div>32</div></div>
 <div id="gut" class="abs"></div>
 <div id="code" class="abs"><div><b class="c">&lt;!--</b><i>·</i><b class="c">===============</b><i>·</i><b class="c">Projekt:</b><i>·</i><b class="c">ProjectPage</b><i>·</i><b class="c">===============</b><i>·</i><b class="c">--&gt;</b></div><div><b class="t">&lt;Page</b></div><div><i>····</i><b class="a">Name</b><b class="v">="Project"</b></div><div><i>····</i><b class="a">Header</b><b class="v">=</b><b class="t">"</b><b class="m">{</b><b class="g">Binding</b><i>·</i><b class="m">DisplayClassName}</b><b class="t">"</b><b class="t">&gt;</b></div><div>&nbsp;</div><div><i>····</i><b class="t">&lt;Group</b><i>·</i><b class="a">Name</b><b class="v">="GeneralGroup"</b><i>·</i><b class="a">Orientation</b><b class="v">="Vertical"</b><b class="t">&gt;</b></div><div><i>········</i><b class="t">&lt;Group</b><i>·</i><b class="a">Name</b><b class="v">="ProjectCodeActiveGroup"</b><b class="t">&gt;</b></div><div><i>············</i><b class="t">&lt;TextBox</b><i>·</i><b class="a">Name</b><b class="v">="ProjectCode"</b><i>·</i><b class="a">Label</b><b class="v">=</b><b class="t">"</b><b class="m">{</b><b class="g">Translate</b><i>·</i><b class="m">'Project-code'}</b><b class="t">"</b><i>·</i><b class="x">Va</b></div><div><i>············</i><b class="t">&lt;CheckBox</b><i>·</i><b class="a">Name</b><b class="v">="Active"</b><i>·</i><b class="a">Text</b><b class="v">=</b><b class="t">"</b><b class="m">{</b><b class="g">Translate</b><i>·</i><b class="m">'Active'}</b><b class="t">"</b><i>·</i><b class="x">ValueExpressi</b></div><div><i>········</i><b class="t">&lt;/Group&gt;</b></div><div><i>········</i><b class="t">&lt;AddressReferenceBox</b><i>·</i><b class="a">Name</b><b class="v">="Customer"</b><i>·</i><b class="a">Label</b><b class="v">=</b><b class="t">"</b><b class="m">{</b><b class="g">Translate</b><i>·</i><b class="m">'Client'}</b><b class="t">"</b><i>·</i><b class="x">Val</b></div><div><i>········</i><b class="t">&lt;TextArea</b><i>·</i><b class="a">Name</b><b class="v">="Description"</b><i>·</i><b class="a">Label</b><b class="v">=</b><b class="t">"</b><b class="m">{</b><b class="g">Translate</b><i>·</i><b class="m">'Description'}</b><b class="t">"</b><i>·</i><b class="x">ValueE</b></div><div><i>········</i><b class="t">&lt;TextArea</b><i>·</i><b class="a">Name</b><b class="v">="Regarding"</b><i>·</i><b class="a">Label</b><b class="v">=</b><b class="t">"</b><b class="m">{</b><b class="g">Translate</b><i>·</i><b class="m">'Regarding'}</b><b class="t">"</b><i>·</i><b class="x">ValueExpre</b></div><div><i>····</i><b class="t">&lt;/Group&gt;</b></div><div>&nbsp;</div><div><i>····</i><b class="t">&lt;Group</b><i>·</i><b class="a">Name</b><b class="v">="SettingsGroup"</b><i>·</i><b class="a">Header</b><b class="v">=</b><b class="t">"</b><b class="m">{</b><b class="g">Translate</b><i>·</i><b class="m">'Settings'}</b><b class="t">"</b><i>·</i><b class="a">Orientation</b><b class="v">="</b></div><div><i>········</i><b class="t">&lt;Group</b><i>·</i><b class="a">Name</b><b class="v">="ProjectTypeIntervalGroup"</b><b class="t">&gt;</b></div><div><i>············</i><b class="t">&lt;ProjectTypeComboBox</b><i>·</i><b class="a">Name</b><b class="v">="ProjectType"</b><i>·</i><b class="a">Label</b><b class="v">=</b><b class="t">"</b><b class="m">{</b><b class="g">Translate</b><i>·</i><b class="m">'Projec</b></div><div><i>············</i><b class="t">&lt;ValueSetComboBox</b><i>·</i><b class="a">Name</b><b class="v">="InvoicePeriod"</b><i>·</i><b class="a">Label</b><b class="v">=</b><b class="t">"</b><b class="m">{</b><b class="g">Translate</b><i>·</i><b class="m">'Invoice</b></div><div><i>········</i><b class="t">&lt;/Group&gt;</b></div><div><i>········</i><b class="t">&lt;Group</b><i>·</i><b class="a">Name</b><b class="v">="RateLanguageGroup"</b><b class="t">&gt;</b></div><div><i>············</i><b class="t">&lt;RateLevelComboBox</b><i>·</i><b class="a">Name</b><b class="v">="RateLevel"</b><i>·</i><b class="a">Label</b><b class="v">=</b><b class="t">"</b><b class="m">{</b><b class="g">Translate</b><i>·</i><b class="m">'Rate</b><i>·</i><b class="m">level</b></div><div><i>············</i><b class="t">&lt;CurrencyComboBox</b><i>·</i><b class="a">Name</b><b class="v">="Currency"</b><i>·</i><b class="a">Label</b><b class="v">=</b><b class="t">"</b><b class="m">{</b><b class="g">Translate</b><i>·</i><b class="m">'Currency'}</b><b class="t">"</b><i>·</i></div><div><i>········</i><b class="t">&lt;/Group&gt;</b></div><div><i>········</i><b class="t">&lt;Group</b><i>·</i><b class="a">Name</b><b class="v">="VatGroup"</b><b class="t">&gt;</b></div><div><i>············</i><b class="t">&lt;VatComboBox</b><i>·</i><b class="a">Name</b><b class="v">="VatType"</b><i>·</i><b class="a">Label</b><b class="v">=</b><b class="t">"</b><b class="m">{</b><b class="g">Translate</b><i>·</i><b class="m">'VAT'}</b><b class="t">"</b><i>·</i><b class="x">ValueExpres</b></div><div><i>············</i><b class="t">&lt;Group</b><i>·</i><b class="a">Name</b><b class="v">="VatTextGroup"</b><b class="t">&gt;</b></div><div><i>················</i><b class="t">&lt;TextBlock</b><i>·</i><b class="a">Name</b><b class="v">="VatRate"</b><i>·</i><b class="a">Label</b><b class="v">=</b><b class="t">"</b><b class="m">{</b><b class="g">Translate</b><i>·</i><b class="m">'Tariff'}</b><b class="t">"</b><i>·</i><b class="a">ShowLa</b></div><div><i>················</i><b class="t">&lt;TextBlock</b><i>·</i><b class="a">Name</b><b class="v">="VatCode"</b><i>·</i><b class="x">ValueExpression</b><b class="v">="mwstcode"</b><i>·</i><b class="a">Horizont</b></div><div><i>············</i><b class="t">&lt;/Group&gt;</b></div><div><i>········</i><b class="t">&lt;/Group&gt;</b></div><div><i>········</i><b class="t">&lt;ValueSetComboBox</b><i>·</i><b class="a">Name</b><b class="v">="ProjectLanguage"</b><i>·</i><b class="a">Label</b><b class="v">=</b><b class="t">"</b><b class="m">{</b><b class="g">Translate</b><i>·</i><b class="m">'Language'</b></div></div>
 <div id="vthumb" class="abs"></div>
 <div id="hthumb" class="abs"></div>
 <div id="corner" class="abs"></div>
</div>

<div id="strip" class="abs"></div>
<div id="side" class="abs"></div>

<div class="th" style="top:93px">
 <svg class="abs" style="left:0;top:0" width="103" height="102" viewBox="0 0 103 102">
  <g fill="#b4b4b4">
  <rect x="2" y="38.2" width="20" height="1"/><rect x="2" y="42.5" width="15.5" height="1"/><rect x="2" y="47.2" width="18.5" height="1"/><rect x="2" y="51.4" width="14" height="1"/><rect x="2" y="56.4" width="9.4" height="1"/><rect x="2" y="60.4" width="10.6" height="1"/>
  </g>
  <g fill="#f1f1f1"><rect x="24" y="36.8" width="50" height="3.4"/><rect x="24" y="41.2" width="50" height="3.4"/><rect x="24" y="45.8" width="50" height="3.4"/><rect x="24" y="50" width="50" height="3.4"/><rect x="24" y="54.8" width="26" height="3.4"/><rect x="24" y="59" width="77" height="17.6"/></g>
  <rect x="25" y="51.2" width="16.6" height="1.1" fill="#8a8a8a"/>
  <g fill="#bdbdbd"><rect x="70" y="37.8" width="2.4" height="0.9"/><rect x="70" y="42.6" width="2.4" height="0.9"/><rect x="70" y="46.8" width="2.4" height="0.9"/></g>
  <rect x="1.6" y="78.6" width="99" height="0.6" fill="#e2e2e2"/>
  <rect x="2" y="80.4" width="19.6" height="1.3" fill="#6e6e6e"/>
  <rect x="2" y="84.6" width="64.6" height="1" fill="#a4a4a4"/>
 </svg>
</div>
<div class="rb" style="top:101.9px;letter-spacing:-0.3px;text-align:left;text-indent:8.1px">Klasseneinst…</div><div class="fd" style="top:128.6px"></div>

<div class="th" style="top:220.6px">
 <svg class="abs" style="left:0;top:0" width="103" height="102" viewBox="0 0 103 102">
  <rect x="2" y="37.6" width="14.6" height="1" fill="#8a8a8a"/><rect x="40" y="37.6" width="16" height="1" fill="#a8a8a8"/><rect x="62.6" y="37.6" width="7" height="1" fill="#b8b8b8"/><rect x="82" y="37.6" width="14" height="1" fill="#a8a8a8"/>
  <rect x="30" y="40.2" width="71" height="4" fill="#f0f0f0"/>
  <rect x="2" y="41.8" width="25" height="1" fill="#8a8a8a"/><rect x="31.6" y="41.8" width="55" height="1" fill="#8a8a8a"/><rect x="95.6" y="41.8" width="4" height="1" fill="#8a8a8a"/>
  <rect x="1.6" y="45.6" width="100" height="0.6" fill="#e6e6e6"/>
 </svg>
</div>
<div class="rb" style="top:229.3px;letter-spacing:0.25px;line-height:27.6px">Weitere Info</div><div class="fd" style="top:256px"></div>

<div id="thsel" class="abs"></div>
<svg class="abs" style="left:1188px;top:384.8px" width="76" height="66" viewBox="0 0 76 66">
 <g transform="translate(3.9,0.9)"><rect x="0.0" y="0.00" width="3.5" height="0.95" fill="#2b962b" opacity="0.5"/><rect x="4.4" y="0.00" width="13.1" height="0.95" fill="#2b962b" opacity="0.5"/><rect x="18.4" y="0.00" width="7.0" height="0.95" fill="#2b962b" opacity="0.5"/><rect x="26.2" y="0.00" width="9.6" height="0.95" fill="#2b962b" opacity="0.5"/><rect x="36.8" y="0.00" width="13.1" height="0.95" fill="#2b962b" opacity="0.5"/><rect x="50.8" y="0.00" width="2.6" height="0.95" fill="#2b962b" opacity="0.5"/><rect x="0.0" y="1.86" width="4.4" height="0.95" fill="#555" opacity="0.5"/><rect x="3.5" y="3.73" width="3.5" height="0.95" fill="#ff3a3a" opacity="0.5"/><rect x="7.0" y="3.73" width="8.8" height="0.95" fill="#3a3aff" opacity="0.5"/><rect x="3.5" y="5.59" width="5.2" height="0.95" fill="#ff3a3a" opacity="0.5"/><rect x="8.8" y="5.59" width="0.9" height="0.95" fill="#3a3aff" opacity="0.5"/><rect x="9.6" y="5.59" width="0.9" height="0.95" fill="#555" opacity="0.5"/><rect x="10.5" y="5.59" width="0.9" height="0.95" fill="#b06a4a" opacity="0.5"/><rect x="11.4" y="5.59" width="6.1" height="0.95" fill="#3f9a6a" opacity="0.5"/><rect x="18.4" y="5.59" width="14.9" height="0.95" fill="#b06a4a" opacity="0.5"/><rect x="33.2" y="5.59" width="0.9" height="0.95" fill="#555" opacity="0.5"/><rect x="34.1" y="5.59" width="0.9" height="0.95" fill="#555" opacity="0.5"/><rect x="3.5" y="9.32" width="5.2" height="0.95" fill="#555" opacity="0.5"/><rect x="9.6" y="9.32" width="3.5" height="0.95" fill="#ff3a3a" opacity="0.5"/><rect x="13.1" y="9.32" width="13.1" height="0.95" fill="#3a3aff" opacity="0.5"/><rect x="27.1" y="9.32" width="9.6" height="0.95" fill="#ff3a3a" opacity="0.5"/><rect x="36.8" y="9.32" width="9.6" height="0.95" fill="#3a3aff" opacity="0.5"/><rect x="46.4" y="9.32" width="0.9" height="0.95" fill="#555" opacity="0.5"/><rect x="7.0" y="11.19" width="5.2" height="0.95" fill="#555" opacity="0.5"/><rect x="13.1" y="11.19" width="3.5" height="0.95" fill="#ff3a3a" opacity="0.5"/><rect x="16.6" y="11.19" width="21.9" height="0.95" fill="#3a3aff" opacity="0.5"/><rect x="38.5" y="11.19" width="0.9" height="0.95" fill="#555" opacity="0.5"/><rect x="10.5" y="13.05" width="7.0" height="0.95" fill="#555" opacity="0.5"/><rect x="18.4" y="13.05" width="3.5" height="0.95" fill="#ff3a3a" opacity="0.5"/><rect x="21.9" y="13.05" width="12.2" height="0.95" fill="#3a3aff" opacity="0.5"/><rect x="35.0" y="13.05" width="4.4" height="0.95" fill="#ff3a3a" opacity="0.5"/><rect x="39.4" y="13.05" width="0.9" height="0.95" fill="#3a3aff" opacity="0.5"/><rect x="40.2" y="13.05" width="0.9" height="0.95" fill="#555" opacity="0.5"/><rect x="41.1" y="13.05" width="0.9" height="0.95" fill="#b06a4a" opacity="0.5"/><rect x="42.0" y="13.05" width="7.9" height="0.95" fill="#3f9a6a" opacity="0.5"/><rect x="50.8" y="13.05" width="13.1" height="0.95" fill="#b06a4a" opacity="0.5"/><rect x="63.9" y="13.05" width="0.9" height="0.95" fill="#555" opacity="0.5"/><rect x="65.6" y="13.05" width="1.4" height="0.95" fill="#e00000" opacity="0.5"/><rect x="10.5" y="14.92" width="7.9" height="0.95" fill="#555" opacity="0.5"/><rect x="19.2" y="14.92" width="3.5" height="0.95" fill="#ff3a3a" opacity="0.5"/><rect x="22.8" y="14.92" width="7.9" height="0.95" fill="#3a3aff" opacity="0.5"/><rect x="31.5" y="14.92" width="3.5" height="0.95" fill="#ff3a3a" opacity="0.5"/><rect x="35.0" y="14.92" width="0.9" height="0.95" fill="#3a3aff" opacity="0.5"/><rect x="35.9" y="14.92" width="0.9" height="0.95" fill="#555" opacity="0.5"/><rect x="36.8" y="14.92" width="0.9" height="0.95" fill="#b06a4a" opacity="0.5"/><rect x="37.6" y="14.92" width="7.9" height="0.95" fill="#3f9a6a" opacity="0.5"/><rect x="46.4" y="14.92" width="7.9" height="0.95" fill="#b06a4a" opacity="0.5"/><rect x="54.2" y="14.92" width="0.9" height="0.95" fill="#555" opacity="0.5"/><rect x="56.0" y="14.92" width="11.0" height="0.95" fill="#e00000" opacity="0.5"/><rect x="7.0" y="16.79" width="7.0" height="0.95" fill="#555" opacity="0.5"/><rect x="7.0" y="18.65" width="17.5" height="0.95" fill="#555" opacity="0.5"/><rect x="25.4" y="18.65" width="3.5" height="0.95" fill="#ff3a3a" opacity="0.5"/><rect x="28.9" y="18.65" width="9.6" height="0.95" fill="#3a3aff" opacity="0.5"/><rect x="39.4" y="18.65" width="4.4" height="0.95" fill="#ff3a3a" opacity="0.5"/><rect x="43.8" y="18.65" width="0.9" height="0.95" fill="#3a3aff" opacity="0.5"/><rect x="44.6" y="18.65" width="0.9" height="0.95" fill="#555" opacity="0.5"/><rect x="45.5" y="18.65" width="0.9" height="0.95" fill="#b06a4a" opacity="0.5"/><rect x="46.4" y="18.65" width="7.9" height="0.95" fill="#3f9a6a" opacity="0.5"/><rect x="55.1" y="18.65" width="7.9" height="0.95" fill="#b06a4a" opacity="0.5"/><rect x="63.0" y="18.65" width="0.9" height="0.95" fill="#555" opacity="0.5"/><rect x="64.8" y="18.65" width="2.2" height="0.95" fill="#e00000" opacity="0.5"/><rect x="7.0" y="20.52" width="7.9" height="0.95" fill="#555" opacity="0.5"/><rect x="15.8" y="20.52" width="3.5" height="0.95" fill="#ff3a3a" opacity="0.5"/><rect x="19.2" y="20.52" width="12.2" height="0.95" fill="#3a3aff" opacity="0.5"/><rect x="32.4" y="20.52" width="4.4" height="0.95" fill="#ff3a3a" opacity="0.5"/><rect x="36.8" y="20.52" width="0.9" height="0.95" fill="#3a3aff" opacity="0.5"/><rect x="37.6" y="20.52" width="0.9" height="0.95" fill="#555" opacity="0.5"/><rect x="38.5" y="20.52" width="0.9" height="0.95" fill="#b06a4a" opacity="0.5"/><rect x="39.4" y="20.52" width="7.9" height="0.95" fill="#3f9a6a" opacity="0.5"/><rect x="48.1" y="20.52" width="12.2" height="0.95" fill="#b06a4a" opacity="0.5"/><rect x="60.4" y="20.52" width="0.9" height="0.95" fill="#555" opacity="0.5"/><rect x="62.1" y="20.52" width="4.9" height="0.95" fill="#e00000" opacity="0.5"/><rect x="7.0" y="22.38" width="7.9" height="0.95" fill="#555" opacity="0.5"/><rect x="15.8" y="22.38" width="3.5" height="0.95" fill="#ff3a3a" opacity="0.5"/><rect x="19.2" y="22.38" width="10.5" height="0.95" fill="#3a3aff" opacity="0.5"/><rect x="30.6" y="22.38" width="4.4" height="0.95" fill="#ff3a3a" opacity="0.5"/><rect x="35.0" y="22.38" width="0.9" height="0.95" fill="#3a3aff" opacity="0.5"/><rect x="35.9" y="22.38" width="0.9" height="0.95" fill="#555" opacity="0.5"/><rect x="36.8" y="22.38" width="0.9" height="0.95" fill="#b06a4a" opacity="0.5"/><rect x="37.6" y="22.38" width="7.9" height="0.95" fill="#3f9a6a" opacity="0.5"/><rect x="46.4" y="22.38" width="10.5" height="0.95" fill="#b06a4a" opacity="0.5"/><rect x="56.9" y="22.38" width="0.9" height="0.95" fill="#555" opacity="0.5"/><rect x="58.6" y="22.38" width="8.4" height="0.95" fill="#e00000" opacity="0.5"/><rect x="3.5" y="24.25" width="7.0" height="0.95" fill="#555" opacity="0.5"/><rect x="3.5" y="27.98" width="5.2" height="0.95" fill="#555" opacity="0.5"/><rect x="9.6" y="27.98" width="3.5" height="0.95" fill="#ff3a3a" opacity="0.5"/><rect x="13.1" y="27.98" width="14.0" height="0.95" fill="#3a3aff" opacity="0.5"/><rect x="28.0" y="27.98" width="5.2" height="0.95" fill="#ff3a3a" opacity="0.5"/><rect x="33.2" y="27.98" width="0.9" height="0.95" fill="#3a3aff" opacity="0.5"/><rect x="34.1" y="27.98" width="0.9" height="0.95" fill="#555" opacity="0.5"/><rect x="35.0" y="27.98" width="0.9" height="0.95" fill="#b06a4a" opacity="0.5"/><rect x="35.9" y="27.98" width="7.9" height="0.95" fill="#3f9a6a" opacity="0.5"/><rect x="44.6" y="27.98" width="9.6" height="0.95" fill="#b06a4a" opacity="0.5"/><rect x="54.2" y="27.98" width="0.9" height="0.95" fill="#555" opacity="0.5"/><rect x="56.0" y="27.98" width="9.6" height="0.95" fill="#ff3a3a" opacity="0.5"/><rect x="65.6" y="27.98" width="1.4" height="0.95" fill="#3a3aff" opacity="0.5"/><rect x="7.0" y="29.84" width="5.2" height="0.95" fill="#555" opacity="0.5"/><rect x="13.1" y="29.84" width="3.5" height="0.95" fill="#ff3a3a" opacity="0.5"/><rect x="16.6" y="29.84" width="23.6" height="0.95" fill="#3a3aff" opacity="0.5"/><rect x="40.2" y="29.84" width="0.9" height="0.95" fill="#555" opacity="0.5"/><rect x="10.5" y="31.70" width="17.5" height="0.95" fill="#555" opacity="0.5"/><rect x="28.9" y="31.70" width="3.5" height="0.95" fill="#ff3a3a" opacity="0.5"/><rect x="32.4" y="31.70" width="12.2" height="0.95" fill="#3a3aff" opacity="0.5"/><rect x="45.5" y="31.70" width="4.4" height="0.95" fill="#ff3a3a" opacity="0.5"/><rect x="49.9" y="31.70" width="0.9" height="0.95" fill="#3a3aff" opacity="0.5"/><rect x="50.8" y="31.70" width="0.9" height="0.95" fill="#555" opacity="0.5"/><rect x="51.6" y="31.70" width="0.9" height="0.95" fill="#b06a4a" opacity="0.5"/><rect x="52.5" y="31.70" width="7.9" height="0.95" fill="#3f9a6a" opacity="0.5"/><rect x="61.2" y="31.70" width="5.8" height="0.95" fill="#b06a4a" opacity="0.5"/><rect x="10.5" y="33.57" width="14.9" height="0.95" fill="#555" opacity="0.5"/><rect x="26.2" y="33.57" width="3.5" height="0.95" fill="#ff3a3a" opacity="0.5"/><rect x="29.8" y="33.57" width="14.0" height="0.95" fill="#3a3aff" opacity="0.5"/><rect x="44.6" y="33.57" width="4.4" height="0.95" fill="#ff3a3a" opacity="0.5"/><rect x="49.0" y="33.57" width="0.9" height="0.95" fill="#3a3aff" opacity="0.5"/><rect x="49.9" y="33.57" width="0.9" height="0.95" fill="#555" opacity="0.5"/><rect x="50.8" y="33.57" width="0.9" height="0.95" fill="#b06a4a" opacity="0.5"/><rect x="51.6" y="33.57" width="7.9" height="0.95" fill="#3f9a6a" opacity="0.5"/><rect x="60.4" y="33.57" width="6.6" height="0.95" fill="#b06a4a" opacity="0.5"/><rect x="7.0" y="35.44" width="7.0" height="0.95" fill="#555" opacity="0.5"/><rect x="7.0" y="37.30" width="5.2" height="0.95" fill="#555" opacity="0.5"/><rect x="13.1" y="37.30" width="3.5" height="0.95" fill="#ff3a3a" opacity="0.5"/><rect x="16.6" y="37.30" width="17.5" height="0.95" fill="#3a3aff" opacity="0.5"/><rect x="34.1" y="37.30" width="0.9" height="0.95" fill="#555" opacity="0.5"/><rect x="10.5" y="39.16" width="15.8" height="0.95" fill="#555" opacity="0.5"/><rect x="27.1" y="39.16" width="3.5" height="0.95" fill="#ff3a3a" opacity="0.5"/><rect x="30.6" y="39.16" width="10.5" height="0.95" fill="#3a3aff" opacity="0.5"/><rect x="42.0" y="39.16" width="4.4" height="0.95" fill="#ff3a3a" opacity="0.5"/><rect x="46.4" y="39.16" width="0.9" height="0.95" fill="#3a3aff" opacity="0.5"/><rect x="47.2" y="39.16" width="0.9" height="0.95" fill="#555" opacity="0.5"/><rect x="48.1" y="39.16" width="0.9" height="0.95" fill="#b06a4a" opacity="0.5"/><rect x="49.0" y="39.16" width="7.9" height="0.95" fill="#3f9a6a" opacity="0.5"/><rect x="57.8" y="39.16" width="4.4" height="0.95" fill="#b06a4a" opacity="0.5"/><rect x="63.0" y="39.16" width="4.0" height="0.95" fill="#b06a4a" opacity="0.5"/><rect x="10.5" y="41.03" width="14.9" height="0.95" fill="#555" opacity="0.5"/><rect x="26.2" y="41.03" width="3.5" height="0.95" fill="#ff3a3a" opacity="0.5"/><rect x="29.8" y="41.03" width="9.6" height="0.95" fill="#3a3aff" opacity="0.5"/><rect x="40.2" y="41.03" width="4.4" height="0.95" fill="#ff3a3a" opacity="0.5"/><rect x="44.6" y="41.03" width="0.9" height="0.95" fill="#3a3aff" opacity="0.5"/><rect x="45.5" y="41.03" width="0.9" height="0.95" fill="#555" opacity="0.5"/><rect x="46.4" y="41.03" width="0.9" height="0.95" fill="#b06a4a" opacity="0.5"/><rect x="47.2" y="41.03" width="7.9" height="0.95" fill="#3f9a6a" opacity="0.5"/><rect x="56.0" y="41.03" width="9.6" height="0.95" fill="#b06a4a" opacity="0.5"/><rect x="65.6" y="41.03" width="0.9" height="0.95" fill="#555" opacity="0.5"/><rect x="7.0" y="42.90" width="7.0" height="0.95" fill="#555" opacity="0.5"/><rect x="7.0" y="44.76" width="5.2" height="0.95" fill="#555" opacity="0.5"/><rect x="13.1" y="44.76" width="3.5" height="0.95" fill="#ff3a3a" opacity="0.5"/><rect x="16.6" y="44.76" width="9.6" height="0.95" fill="#3a3aff" opacity="0.5"/><rect x="26.2" y="44.76" width="0.9" height="0.95" fill="#555" opacity="0.5"/><rect x="10.5" y="46.62" width="10.5" height="0.95" fill="#555" opacity="0.5"/><rect x="21.9" y="46.62" width="3.5" height="0.95" fill="#ff3a3a" opacity="0.5"/><rect x="25.4" y="46.62" width="8.8" height="0.95" fill="#3a3aff" opacity="0.5"/><rect x="35.0" y="46.62" width="4.4" height="0.95" fill="#ff3a3a" opacity="0.5"/><rect x="39.4" y="46.62" width="0.9" height="0.95" fill="#3a3aff" opacity="0.5"/><rect x="40.2" y="46.62" width="0.9" height="0.95" fill="#555" opacity="0.5"/><rect x="41.1" y="46.62" width="0.9" height="0.95" fill="#b06a4a" opacity="0.5"/><rect x="42.0" y="46.62" width="7.9" height="0.95" fill="#3f9a6a" opacity="0.5"/><rect x="50.8" y="46.62" width="5.2" height="0.95" fill="#b06a4a" opacity="0.5"/><rect x="56.0" y="46.62" width="0.9" height="0.95" fill="#555" opacity="0.5"/><rect x="57.8" y="46.62" width="9.2" height="0.95" fill="#e00000" opacity="0.5"/><rect x="10.5" y="48.49" width="5.2" height="0.95" fill="#555" opacity="0.5"/><rect x="16.6" y="48.49" width="3.5" height="0.95" fill="#ff3a3a" opacity="0.5"/><rect x="20.1" y="48.49" width="13.1" height="0.95" fill="#3a3aff" opacity="0.5"/><rect x="33.2" y="48.49" width="0.9" height="0.95" fill="#555" opacity="0.5"/><rect x="14.0" y="50.35" width="8.8" height="0.95" fill="#555" opacity="0.5"/><rect x="23.6" y="50.35" width="3.5" height="0.95" fill="#ff3a3a" opacity="0.5"/><rect x="27.1" y="50.35" width="8.8" height="0.95" fill="#3a3aff" opacity="0.5"/><rect x="36.8" y="50.35" width="4.4" height="0.95" fill="#ff3a3a" opacity="0.5"/><rect x="41.1" y="50.35" width="0.9" height="0.95" fill="#3a3aff" opacity="0.5"/><rect x="42.0" y="50.35" width="0.9" height="0.95" fill="#555" opacity="0.5"/><rect x="42.9" y="50.35" width="0.9" height="0.95" fill="#b06a4a" opacity="0.5"/><rect x="43.8" y="50.35" width="7.9" height="0.95" fill="#3f9a6a" opacity="0.5"/><rect x="52.5" y="50.35" width="7.9" height="0.95" fill="#b06a4a" opacity="0.5"/><rect x="60.4" y="50.35" width="0.9" height="0.95" fill="#555" opacity="0.5"/><rect x="62.1" y="50.35" width="4.9" height="0.95" fill="#ff3a3a" opacity="0.5"/><rect x="14.0" y="52.22" width="8.8" height="0.95" fill="#555" opacity="0.5"/><rect x="23.6" y="52.22" width="3.5" height="0.95" fill="#ff3a3a" opacity="0.5"/><rect x="27.1" y="52.22" width="8.8" height="0.95" fill="#3a3aff" opacity="0.5"/><rect x="36.8" y="52.22" width="13.1" height="0.95" fill="#e00000" opacity="0.5"/><rect x="49.9" y="52.22" width="9.6" height="0.95" fill="#3a3aff" opacity="0.5"/><rect x="60.4" y="52.22" width="6.6" height="0.95" fill="#ff3a3a" opacity="0.5"/><rect x="10.5" y="54.09" width="7.0" height="0.95" fill="#555" opacity="0.5"/><rect x="7.0" y="55.95" width="7.0" height="0.95" fill="#555" opacity="0.5"/><rect x="7.0" y="57.81" width="14.9" height="0.95" fill="#555" opacity="0.5"/><rect x="22.8" y="57.81" width="3.5" height="0.95" fill="#ff3a3a" opacity="0.5"/><rect x="26.2" y="57.81" width="15.8" height="0.95" fill="#3a3aff" opacity="0.5"/><rect x="42.9" y="57.81" width="4.4" height="0.95" fill="#ff3a3a" opacity="0.5"/><rect x="47.2" y="57.81" width="0.9" height="0.95" fill="#3a3aff" opacity="0.5"/><rect x="48.1" y="57.81" width="0.9" height="0.95" fill="#555" opacity="0.5"/><rect x="49.0" y="57.81" width="0.9" height="0.95" fill="#b06a4a" opacity="0.5"/><rect x="49.9" y="57.81" width="7.9" height="0.95" fill="#3f9a6a" opacity="0.5"/><rect x="58.6" y="57.81" width="8.4" height="0.95" fill="#b06a4a" opacity="0.5"/></g>
 <rect x="3.4" y="0.4" width="0.35" height="60" fill="#bbb"/>
 <rect x="72.4" y="0.8" width="0.8" height="5" fill="#888"/>
 <rect x="0.6" y="63.6" width="36" height="0.8" fill="#aaa"/>
 <rect x="0" y="64.6" width="75" height="0.4" fill="#ddd"/>
</svg>
<div class="rb" style="top:357px">Seiten</div><div class="fd" style="top:383.7px"></div>

<div id="botline" class="abs"></div>
</div></body></html>
